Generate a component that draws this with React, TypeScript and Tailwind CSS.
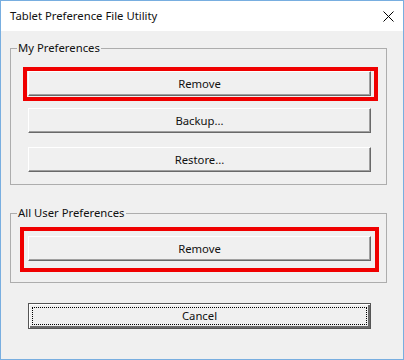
import type { ReactNode } from "react";

function Btn({ children, className = "" }: { children: ReactNode; className?: string }) {
  return (
    <div
      className={`h-[25px] w-[343px] flex items-center justify-center bg-[#f0f0f0] border-t border-l border-t-white border-l-white border-b border-r border-b-[#696969] border-r-[#696969] shadow-[inset_-1px_-1px_0_#a0a0a0] ${className}`}
    >
      {children}
    </div>
  );
}

function CloseIcon() {
  return (
    <svg width="11" height="11" viewBox="0 0 11 11" className="block">
      <path d="M0.5 0.5 L10.5 10.5 M10.5 0.5 L0.5 10.5" stroke="#000" strokeWidth="1" fill="none" />
    </svg>
  );
}

export default function App() {
  return (
    <div className="w-[404px] h-[360px] flex flex-col bg-[#f0f0f0] border border-[#78aee0] font-['Noto_Sans',sans-serif] text-[11.3px] leading-[16px] text-[#111]">
      {/* title bar */}
      <div className="h-[30px] bg-white flex items-center justify-between pl-[9px] pr-[9px]">
        <span>Tablet Preference File Utility</span>
        <CloseIcon />
      </div>

      <div className="flex-1 pl-[9px] pt-[9px]">
        {/* My Preferences */}
        <fieldset className="w-[377px] border border-[#adadad]">
          <legend className="ml-[6px] px-[1px] leading-[16px]">My Preferences</legend>
          <div className="mt-[11px] ml-[12px] w-[355px] border-4 border-[#f00000] pl-[1px] pr-[2px] pb-[1px]">
            <Btn>Remove</Btn>
          </div>
          <Btn className="mt-[7px] ml-[17px]">Backup...</Btn>
          <Btn className="mt-[14px] ml-[17px] mb-[12px]">Restore...</Btn>
        </fieldset>

        {/* All User Preferences */}
        <fieldset className="mt-[20px] w-[377px] border border-[#adadad]">
          <legend className="ml-[6px] px-[1px] leading-[16px]">All User Preferences</legend>
          <div className="mt-[6px] ml-[9px] w-[359px] border-4 border-[#f00000] pl-[4px] pt-[5px] pb-[7px]">
            <Btn>Remove</Btn>
          </div>
          <div className="h-[10px]" />
        </fieldset>

        {/* Cancel (default button) */}
        <div className="mt-[20px] ml-[18px] w-[343px] h-[26px] border border-[#555] bg-[#f0f0f0] shadow-[inset_1px_1px_0_#fff,inset_-2px_-2px_0_#6a6a6a] p-[3px]">
          <div className="h-full w-full border border-dotted border-black flex items-center justify-center">
            Cancel
          </div>
        </div>
      </div>
    </div>
  );
}
